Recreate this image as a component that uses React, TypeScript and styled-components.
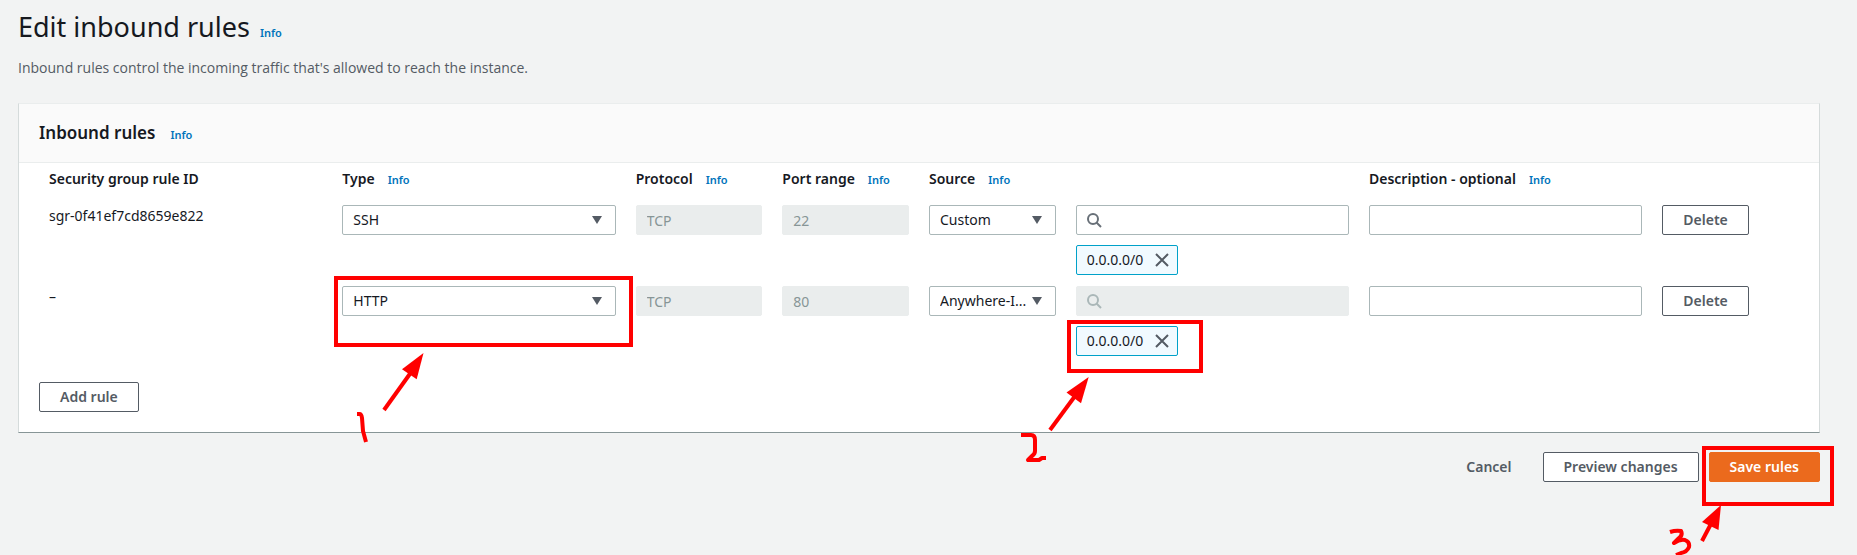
import React from "react";
import styled, { createGlobalStyle } from "styled-components";

const GlobalStyle = createGlobalStyle`
  *, *::before, *::after { box-sizing: border-box; }
  body {
    margin: 0;
    background: #f2f3f3;
    color: #16191f;
    font: 14px/22px "Noto Sans", "Open Sans", sans-serif;
  }
  #root { overflow: hidden; }
`;

const red = "#ff0000";

const Page = styled.main`
  padding: 9px 37px 73px 18px;
`;

const Title = styled.h1`
  margin: 0;
  font-size: 27px;
  line-height: 36px;
  font-weight: 400;
`;

const InfoLink = styled.a<{ $gap: number }>`
  margin-left: ${({ $gap }) => $gap}px;
  color: #0073bb;
  font-size: 11px;
  line-height: 12px;
  font-weight: 600;
  text-decoration: none;
`;

const Intro = styled.p`
  margin: 0;
  padding: 12px 0 24px;
  color: #545b64;
  font-family: "Open Sans", "Noto Sans", sans-serif;
`;

const Card = styled.section`
  background: #fff;
  border: 1px solid #d5dbdb;
  border-top-color: #eaeded;
  border-bottom-color: #879596;
`;

const CardHeader = styled.header`
  display: flex;
  align-items: baseline;
  padding: 18px 20px;
  background: #fafafa;
  border-bottom: 1px solid #eaeded;
`;

const CardTitle = styled.h2`
  margin: 0;
  font-size: 17px;
  line-height: 22px;
  font-weight: 600;
`;

const RulesTable = styled.table`
  display: block;
  padding: 5px 30px 0;
  thead, tbody { display: block; }
`;

const Row = styled.tr`
  display: grid;
  grid-template-columns: repeat(12, minmax(0, 1fr));
  column-gap: 20px;
  & + & { margin-top: 11px; }
`;

const HeadCell = styled.th<{ $span: number }>`
  grid-column: span ${({ $span }) => $span};
  padding: 0 0 15px;
  font-weight: 600;
  text-align: left;
  white-space: nowrap;
`;

const Cell = styled.td<{ $span: number }>`
  position: relative;
  grid-column: span ${({ $span }) => $span};
  padding: 0;
`;

const Control = styled.span`
  position: relative;
  display: block;
`;

const Select = styled.select`
  appearance: none;
  display: block;
  width: 100%;
  height: 30px;
  padding: 0 25px 0 10px;
  border: 1px solid #aab7b8;
  border-radius: 2px;
  background: #fff;
  color: #16191f;
  font: inherit;
  text-overflow: ellipsis;
`;

const Caret = styled.svg`
  position: absolute;
  top: 11px;
  right: 14px;
  pointer-events: none;
`;

const Input = styled.input<{ $search?: boolean }>`
  display: block;
  width: 100%;
  height: 30px;
  padding: 0 10px 0 ${({ $search }) => ($search ? 35 : 10)}px;
  border: 1px solid #aab7b8;
  border-radius: 2px;
  background: #fff;
  color: #16191f;
  font: inherit;
  &:disabled {
    border-color: #eaeded;
    background: #eaeded;
    color: #879596;
  }
`;

const SearchIcon = styled.svg<{ $off?: boolean }>`
  position: absolute;
  top: 7px;
  left: 10px;
  fill: none;
  stroke: ${({ $off }) => ($off ? "#aab7b8" : "#687078")};
  stroke-width: 2;
`;

const Token = styled.span`
  display: inline-flex;
  align-items: center;
  gap: 12px;
  height: 30px;
  margin-top: 10px;
  padding: 0 8px 0 10px;
  border: 1px solid #00a1c9;
  border-radius: 2px;
  background: #f1faff;
  vertical-align: top;
`;

const Dismiss = styled.button`
  display: flex;
  padding: 0;
  border: 0;
  background: none;
`;

const buttonColors = {
  normal: { border: "#545b64", fill: "#fff", text: "#545b64" },
  link: { border: "transparent", fill: "transparent", text: "#545b64" },
  primary: { border: "#eb6a1d", fill: "#eb6a1d", text: "#fff" },
};

const Button = styled.button<{ $kind?: keyof typeof buttonColors }>`
  height: 30px;
  padding: 0 20px;
  border: 1px solid ${({ $kind = "normal" }) => buttonColors[$kind].border};
  border-radius: 2px;
  background: ${({ $kind = "normal" }) => buttonColors[$kind].fill};
  color: ${({ $kind = "normal" }) => buttonColors[$kind].text};
  font: inherit;
  font-weight: 600;
  white-space: nowrap;
`;

const CardFooter = styled.div`
  padding: 26px 20px 20px;
`;

const Actions = styled.div`
  display: flex;
  justify-content: flex-end;
  gap: 10px;
  margin-top: 19px;
`;

const Anchor = styled.span`
  position: relative;
  display: flex;
`;

const Frame = styled.span<{ $inset: string; $height: number }>`
  position: absolute;
  inset: ${({ $inset }) => $inset};
  height: ${({ $height }) => $height}px;
  border: 4px solid ${red};
  pointer-events: none;
`;

const Sketch = styled.svg`
  position: absolute;
  left: 0;
  top: 0;
  overflow: visible;
  pointer-events: none;
  fill: none;
  stroke: ${red};
  stroke-width: 4;
  stroke-linejoin: round;
`;

const ArrowHead = styled.path`
  fill: ${red};
  stroke: none;
`;

function Info({ gap = 13 }: { gap?: number }) {
  return <InfoLink href="#info" $gap={gap}>Info</InfoLink>;
}

function Mark({ shaft, head, stroke }: { shaft: string; head: string; stroke: string }) {
  return (
    <Sketch width="1" height="1" aria-hidden="true">
      <path d={shaft} />
      <ArrowHead d={head} />
      <path d={stroke} />
    </Sketch>
  );
}

function Dropdown({ label, value }: { label: string; value: string }) {
  return (
    <Control>
      <Select aria-label={label} defaultValue={value}>
        <option>{value}</option>
      </Select>
      <Caret width="10" height="8" aria-hidden="true"><path d="M0 0h10L5 8z" fill="#545b64" /></Caret>
    </Control>
  );
}

function Search({ disabled }: { disabled?: boolean }) {
  return (
    <Control>
      <Input type="text" aria-label="Source search" $search disabled={disabled} />
      <SearchIcon width="16" height="16" $off={disabled} aria-hidden="true">
        <circle cx="7" cy="7" r="5" /><path d="M10.5 10.5l4.5 4.5" />
      </SearchIcon>
    </Control>
  );
}

function CidrToken() {
  return (
    <Token>
      0.0.0.0/0
      <Dismiss type="button" aria-label="Remove 0.0.0.0/0">
        <svg width="14" height="14" fill="none" stroke="#545b64" strokeWidth="2"><path d="M1 1l12 12M13 1L1 13" /></svg>
      </Dismiss>
    </Token>
  );
}

const columns = [
  { name: "Security group rule ID", span: 2, info: false },
  { name: "Type", span: 2, info: true },
  { name: "Protocol", span: 1, info: true },
  { name: "Port range", span: 1, info: true },
  { name: "Source", span: 3, info: true },
  { name: "Description - optional", span: 2, info: true },
];

const rules = [
  { id: "sgr-0f41ef7cd8659e822", type: "SSH", port: "22", source: "Custom", marked: false },
  { id: "–", type: "HTTP", port: "80", source: "Anywhere-I...", marked: true },
];

export default function App() {
  return (
    <>
      <GlobalStyle />
      <Page>
        <Title>Edit inbound rules<Info gap={10} /></Title>
        <Intro>Inbound rules control the incoming traffic that's allowed to reach the instance.</Intro>
        <Card>
          <CardHeader><CardTitle>Inbound rules</CardTitle><Info gap={15} /></CardHeader>
          <RulesTable>
            <thead>
              <Row>
                {columns.map((c) => (
                  <HeadCell key={c.name} $span={c.span} colSpan={c.name === "Source" ? 2 : 1} scope="col">
                    {c.name}{c.info && <Info />}
                  </HeadCell>
                ))}
              </Row>
            </thead>
            <tbody>
              {rules.map((r) => (
                <Row key={r.id}>
                  <Cell $span={2}>{r.id}</Cell>
                  <Cell $span={2}>
                    <Dropdown label="Type" value={r.type} />
                    {r.marked && (
                      <>
                        <Frame $inset="-10px -17px auto -8px" $height={71} />
                        <Mark
                          shaft="M42 124L75 78"
                          head="M81.5 67L60 83.3L74.7 93.3z"
                          stroke="M15 128h2.5q2 0 2.5 4l1 13 3 11"
                        />
                      </>
                    )}
                  </Cell>
                  <Cell $span={1}><Input aria-label="Protocol" defaultValue="TCP" disabled /></Cell>
                  <Cell $span={1}><Input aria-label="Port range" defaultValue={r.port} disabled /></Cell>
                  <Cell $span={1}><Dropdown label="Source" value={r.source} /></Cell>
                  <Cell $span={2}>
                    <Search disabled={r.marked} />
                    <CidrToken />
                    {r.marked && (
                      <>
                        <Frame $inset="34px 146px auto -9px" $height={53} />
                        <Mark
                          shaft="M-26 144L2 106"
                          head="M12.7 91L-9.5 106.5L5 117.3z"
                          stroke="M-55 149h10q4 0 4 5v11q0 3-3 5l-4 4h11l3-2h4"
                        />
                      </>
                    )}
                  </Cell>
                  <Cell $span={2}><Input aria-label="Description" /></Cell>
                  <Cell $span={1}><Button type="button">Delete</Button></Cell>
                </Row>
              ))}
            </tbody>
          </RulesTable>
          <CardFooter><Button type="button">Add rule</Button></CardFooter>
        </Card>
        <Actions>
          <Button type="button" $kind="link">Cancel</Button>
          <Button type="button">Preview changes</Button>
          <Anchor>
            <Button type="button" $kind="primary">Save rules</Button>
            <Frame $inset="-6px -14px auto -7px" $height={60} />
            <Mark
              shaft="M-7 89L4 68"
              head="M12 53L-7 70L9.5 78z"
              stroke="M-39 80q6-2 11-1q2 4-2 7l-5 5q6-4 11-3q5 2 4 7q-2 5-8 6l-5 2"
            />
          </Anchor>
        </Actions>
      </Page>
    </>
  );
}
